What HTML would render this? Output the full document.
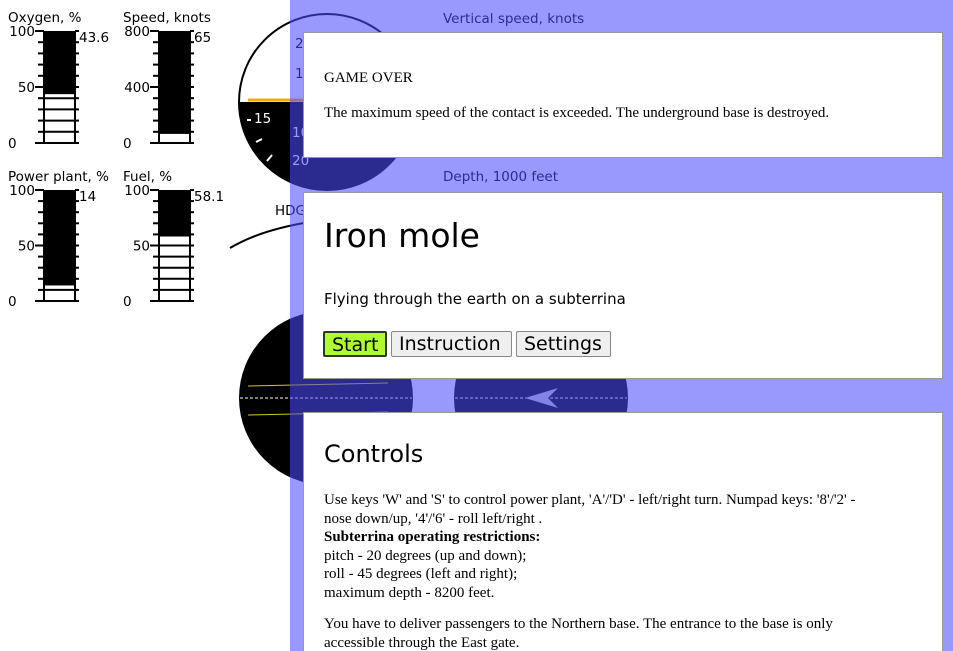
<!DOCTYPE html><html style="overflow:hidden;height:651px"><head><style>
body{margin:0;width:953px;height:651px;overflow:hidden;background:#fff;position:relative;font-family:"DejaVu Sans",sans-serif}
#ov{position:absolute;left:290px;top:0;width:663px;height:651px;background:rgba(76,76,251,0.57)}
.p{position:absolute;left:303px;width:638px;background:#fff;border:1px solid #999}
.s{font-family:"Liberation Serif",serif;font-size:15px;color:#000}
.b{position:absolute;top:331px;height:26px;font-size:19px;line-height:24px;box-sizing:border-box;border:1px solid #888;background:#efefef;border-radius:2px;padding:0 7px}
</style></head><body>
<svg width="953" height="651" style="position:absolute;left:0;top:0" font-family="DejaVu Sans" font-size="13.5">
<g id="g"></g>
<circle cx="327" cy="102" r="88" fill="#fff" stroke="#000" stroke-width="2"/>
<path d="M239 102 A88 88 0 0 0 415 102 Z" fill="#000"/>
<line x1="248" y1="100" x2="330" y2="100" stroke="#f7a800" stroke-width="3"/>
<text x="254" y="123" fill="#fff">15</text>
<line x1="247" y1="120" x2="251" y2="120" stroke="#fff" stroke-width="2"/>
<line x1="256" y1="142" x2="262" y2="139" stroke="#fff" stroke-width="2"/>
<line x1="267" y1="161" x2="272" y2="155" stroke="#fff" stroke-width="2"/>
<text x="292" y="165" fill="#fff">20</text><text x="292" y="137" fill="#fff">10</text>
<text x="295" y="48" fill="#000">2</text><text x="295" y="78" fill="#000">1</text>
<text x="275" y="215" fill="#000">HDG</text>
<path d="M230 248 Q260 230 310 222" fill="none" stroke="#000" stroke-width="2"/>
<circle cx="326" cy="398" r="87" fill="#000"/>
<line x1="248" y1="386" x2="388" y2="383" stroke="#cc0" stroke-width="1"/>
<line x1="248" y1="415" x2="388" y2="412" stroke="#cc0" stroke-width="1"/>
<line x1="240" y1="398" x2="412" y2="398" stroke="#fff" stroke-dasharray="3 2"/>
<circle cx="541" cy="398" r="87" fill="#000"/>
<line x1="455" y1="398" x2="627" y2="398" stroke="#fff" stroke-dasharray="3 2"/>
<path d="M525 398 L558 388 L548 398 L558 408 Z" fill="#ccc"/>
<text x="443" y="23" fill="#000">Vertical speed, knots</text>
<text x="443" y="181" fill="#000">Depth, 1000 feet</text>
</svg>
<div id="ov"></div>
<div class="p s" style="top:32px;height:124px"><div style="position:absolute;left:20px;top:37px">GAME OVER</div><div style="position:absolute;left:20px;top:72px">The maximum speed of the contact is exceeded. The underground base is destroyed.</div></div>
<div class="p" style="top:192px;height:185px"><div style="position:absolute;left:20px;top:23px;font-size:33px">Iron mole</div><div style="position:absolute;left:20px;top:97px;font-size:15px">Flying through the earth on a subterrina</div></div>
<div class="b" style="left:323px;width:64px;background:#adff2f;border:2px solid #333">Start</div>
<div class="b" style="left:391px;width:121px">Instruction</div>
<div class="b" style="left:516px;width:95px">Settings</div>
<div class="p" style="top:412px;height:260px"><div style="position:absolute;left:20px;top:27px;font-size:24px">Controls</div>
<div class="s" style="position:absolute;left:20px;top:78px;width:555px;line-height:18.5px">Use keys 'W' and 'S' to control power plant, 'A'/'D' - left/right turn. Numpad keys: '8'/'2' - nose down/up, '4'/'6' - roll left/right .<br><b>Subterrina operating restrictions:</b><br>pitch - 20 degrees (up and down);<br>roll - 45 degrees (left and right);<br>maximum depth - 8200 feet.<div style="height:13px"></div>You have to deliver passengers to the Northern base. The entrance to the base is only accessible through the East gate.</div></div>
<script>
var g=document.getElementById('g'),s='';
function G(x,y0,y1,lab,v,max,mid,frac,val){var h=y1-y0,w=y1-h*frac;
s+='<text x="'+x+'" y="'+(y0-9)+'">'+lab+'</text>';
s+='<rect x="'+(x+36)+'" y="'+y0+'" width="31" height="'+(w-y0)+'" fill="#000"/>';
for(var i=0;i<=10;i++){var y=y1-h*i/10;var big=(i%5==0);
s+='<line x1="'+(x+(big?27:30))+'" y1="'+y+'" x2="'+(x+36)+'" y2="'+y+'" stroke="#000" stroke-width="2"/>';
s+='<line x1="'+(x+67)+'" y1="'+y+'" x2="'+(x+71)+'" y2="'+y+'" stroke="#000" stroke-width="2"/>';
if(y>w)s+='<line x1="'+(x+36)+'" y1="'+y+'" x2="'+(x+67)+'" y2="'+y+'" stroke="#000" stroke-width="2"/>';}
s+='<line x1="'+(x+36)+'" y1="'+y0+'" x2="'+(x+36)+'" y2="'+y1+'" stroke="#000" stroke-width="2"/>';
s+='<line x1="'+(x+67)+'" y1="'+y0+'" x2="'+(x+67)+'" y2="'+y1+'" stroke="#000" stroke-width="2"/>';
s+='<text x="'+(x+27)+'" y="'+(y0+5)+'" text-anchor="end">'+max+'</text>';
s+='<text x="'+(x+27)+'" y="'+((y0+y1)/2+5)+'" text-anchor="end">'+mid+'</text>';
s+='<text x="'+x+'" y="'+(y1+5)+'">0</text>';
s+='<text x="'+(x+71)+'" y="'+(y0+11)+'">'+val+'</text>';}
G(8,31,143,'Oxygen, %',0,100,50,.436,'43.6');
G(123,31,143,'Speed, knots',0,800,400,65/800,'65');
G(8,190,301,'Power plant, %',0,100,50,.14,'14');
G(123,190,301,'Fuel, %',0,100,50,.581,'58.1');
g.innerHTML=s;
</script>
</body></html>
